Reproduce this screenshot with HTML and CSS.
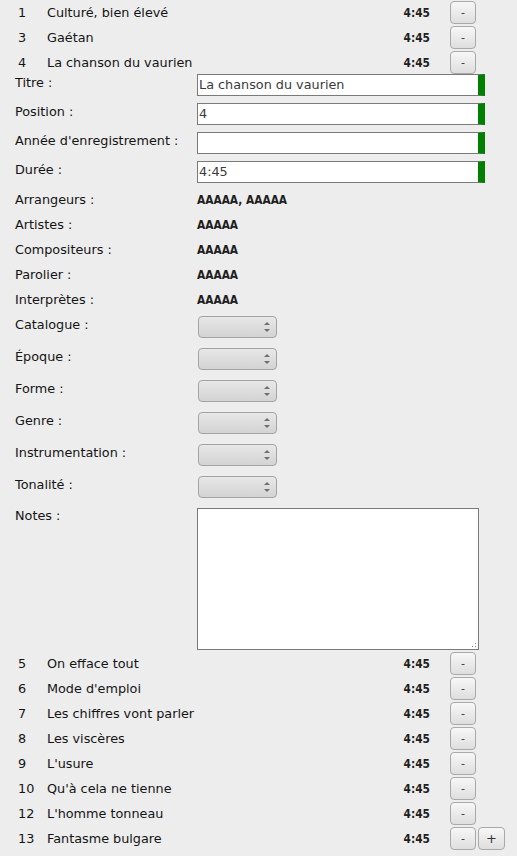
FILE: index.html
```html
<!DOCTYPE html>
<html lang="fr">
<head>
<meta charset="utf-8">
<title>Pistes</title>
<link rel="stylesheet" href="styles.css">
</head>
<body>
<div class="tracks">
  <div class="track"><span class="num">1</span><span class="title">Culturé, bien élevé</span><span class="dur">4:45</span><button class="btn">-</button><span class="slot"></span></div>
  <div class="track"><span class="num">3</span><span class="title">Gaétan</span><span class="dur">4:45</span><button class="btn">-</button><span class="slot"></span></div>
  <div class="track"><span class="num">4</span><span class="title">La chanson du vaurien</span><span class="dur">4:45</span><button class="btn">-</button><span class="slot"></span></div>
</div>

<div class="form">
  <div class="frow input-row"><span class="label">Titre :</span><div class="field">La chanson du vaurien</div></div>
  <div class="frow input-row"><span class="label">Position :</span><div class="field">4</div></div>
  <div class="frow input-row"><span class="label">Année d'enregistrement :</span><div class="field"></div></div>
  <div class="frow input-row"><span class="label">Durée :</span><div class="field">4:45</div></div>
  <div class="frow text-row"><span class="label">Arrangeurs :</span><span class="value">AAAAA, AAAAA</span></div>
  <div class="frow text-row"><span class="label">Artistes :</span><span class="value">AAAAA</span></div>
  <div class="frow text-row"><span class="label">Compositeurs :</span><span class="value">AAAAA</span></div>
  <div class="frow text-row"><span class="label">Parolier :</span><span class="value">AAAAA</span></div>
  <div class="frow text-row"><span class="label">Interprètes :</span><span class="value">AAAAA</span></div>
  <div class="frow combo-row"><span class="label">Catalogue :</span><div class="combo"><span class="arrows"><i class="up"></i><i class="down"></i></span></div></div>
  <div class="frow combo-row"><span class="label">Époque :</span><div class="combo"><span class="arrows"><i class="up"></i><i class="down"></i></span></div></div>
  <div class="frow combo-row"><span class="label">Forme :</span><div class="combo"><span class="arrows"><i class="up"></i><i class="down"></i></span></div></div>
  <div class="frow combo-row"><span class="label">Genre :</span><div class="combo"><span class="arrows"><i class="up"></i><i class="down"></i></span></div></div>
  <div class="frow combo-row"><span class="label">Instrumentation :</span><div class="combo"><span class="arrows"><i class="up"></i><i class="down"></i></span></div></div>
  <div class="frow combo-row"><span class="label">Tonalité :</span><div class="combo"><span class="arrows"><i class="up"></i><i class="down"></i></span></div></div>
  <div class="frow notes-row"><span class="label">Notes :</span><div class="notes"><svg class="grip" width="6" height="6" viewBox="0 0 6 6"><rect x="4" y="1" width="1" height="1" fill="#888"/><rect x="1" y="4" width="1" height="1" fill="#888"/><rect x="4" y="4" width="1" height="1" fill="#888"/></svg></div></div>
</div>

<div class="tracks">
  <div class="track"><span class="num">5</span><span class="title">On efface tout</span><span class="dur">4:45</span><button class="btn">-</button><span class="slot"></span></div>
  <div class="track"><span class="num">6</span><span class="title">Mode d'emploi</span><span class="dur">4:45</span><button class="btn">-</button><span class="slot"></span></div>
  <div class="track"><span class="num">7</span><span class="title">Les chiffres vont parler</span><span class="dur">4:45</span><button class="btn">-</button><span class="slot"></span></div>
  <div class="track"><span class="num">8</span><span class="title">Les viscères</span><span class="dur">4:45</span><button class="btn">-</button><span class="slot"></span></div>
  <div class="track"><span class="num">9</span><span class="title">L'usure</span><span class="dur">4:45</span><button class="btn">-</button><span class="slot"></span></div>
  <div class="track"><span class="num">10</span><span class="title">Qu'à cela ne tienne</span><span class="dur">4:45</span><button class="btn">-</button><span class="slot"></span></div>
  <div class="track"><span class="num">12</span><span class="title">L'homme tonneau</span><span class="dur">4:45</span><button class="btn">-</button><span class="slot"></span></div>
  <div class="track"><span class="num">13</span><span class="title">Fantasme bulgare</span><span class="dur">4:45</span><button class="btn">-</button><button class="btn plus">+</button></div>
</div>
</body>
</html>
```
FILE: styles.css
```css
html, body {
  margin: 0;
  padding: 0;
  background: #ededed;
}
body {
  width: 517px;
  height: 856px;
  overflow: hidden;
  font-family: "DejaVu Sans", sans-serif;
  font-size: 12.8px;
  color: #141414;
}

.tracks {
  display: flex;
  flex-direction: column;
}
.track {
  display: flex;
  align-items: center;
  height: 25px;
  padding: 0 12px 0 18px;
}
.num {
  width: 29px;
  flex: none;
}
.title {
  flex: 1;
}
.dur {
  font-family: "DejaVu Sans Condensed", "DejaVu Sans", sans-serif;
  font-weight: bold;
  font-size: 11.8px;
  color: #1e1e1e;
  margin-right: 20px;
}
.btn {
  box-sizing: border-box;
  width: 26px;
  height: 23px;
  padding: 0;
  margin: 0;
  border: 1px solid #a9a9a9;
  border-radius: 4px;
  background: linear-gradient(#f7f7f7, #dedede);
  font-family: "DejaVu Sans", sans-serif;
  font-size: 11px;
  color: #333;
  line-height: 20px;
}
.slot {
  width: 29px;
  flex: none;
}
.plus {
  width: 27px;
  margin-left: 2px;
  font-size: 13px;
}

.form {
  display: flex;
  flex-direction: column;
  gap: 7px;
  padding-left: 15px;
  margin-top: -1px;
}
.frow {
  display: flex;
  align-items: flex-start;
}
.label {
  width: 182px;
  flex: none;
  line-height: 16px;
  padding-top: 1px;
}
.input-row {
  height: 22px;
}
.field {
  box-sizing: border-box;
  width: 288px;
  height: 22px;
  background: #fff;
  border: 1px solid #7a7a7a;
  border-right: 7px solid #008000;
  padding: 0 2px 0 1px;
  line-height: 20px;
  color: #3a3a3a;
}
.text-row {
  height: 18px;
}
.text-row .label {
  padding-top: 2px;
}
.value {
  font-family: "DejaVu Sans Condensed", "DejaVu Sans", sans-serif;
  font-weight: bold;
  font-size: 11.8px;
  color: #1e1e1e;
  line-height: 16px;
  padding-top: 2px;
}
.combo-row {
  height: 25px;
}
.combo-row .label {
  padding-top: 2px;
}
.combo {
  box-sizing: border-box;
  width: 79px;
  height: 22px;
  margin: 1px 0 0 1px;
  border: 1px solid #a3a3a3;
  border-radius: 4px;
  background: linear-gradient(#e8e8e8, #d3d3d3);
  display: flex;
  justify-content: flex-end;
  align-items: center;
  padding-right: 6px;
}
.arrows {
  display: flex;
  flex-direction: column;
  gap: 4px;
}
.arrows i {
  display: block;
  width: 0;
  height: 0;
  border-left: 3px solid transparent;
  border-right: 3px solid transparent;
}
.arrows .up {
  border-bottom: 3px solid #6e6e6e;
}
.arrows .down {
  border-top: 3px solid #6e6e6e;
}
.notes-row {
  height: 144px;
}
.notes {
  box-sizing: border-box;
  width: 282px;
  height: 142px;
  margin-top: 1px;
  background: #fff;
  border: 1px solid #7a7a7a;
  display: flex;
  justify-content: flex-end;
  align-items: flex-end;
}
.grip {
  display: block;
  margin: 0 1px 1px 0;
}
```
